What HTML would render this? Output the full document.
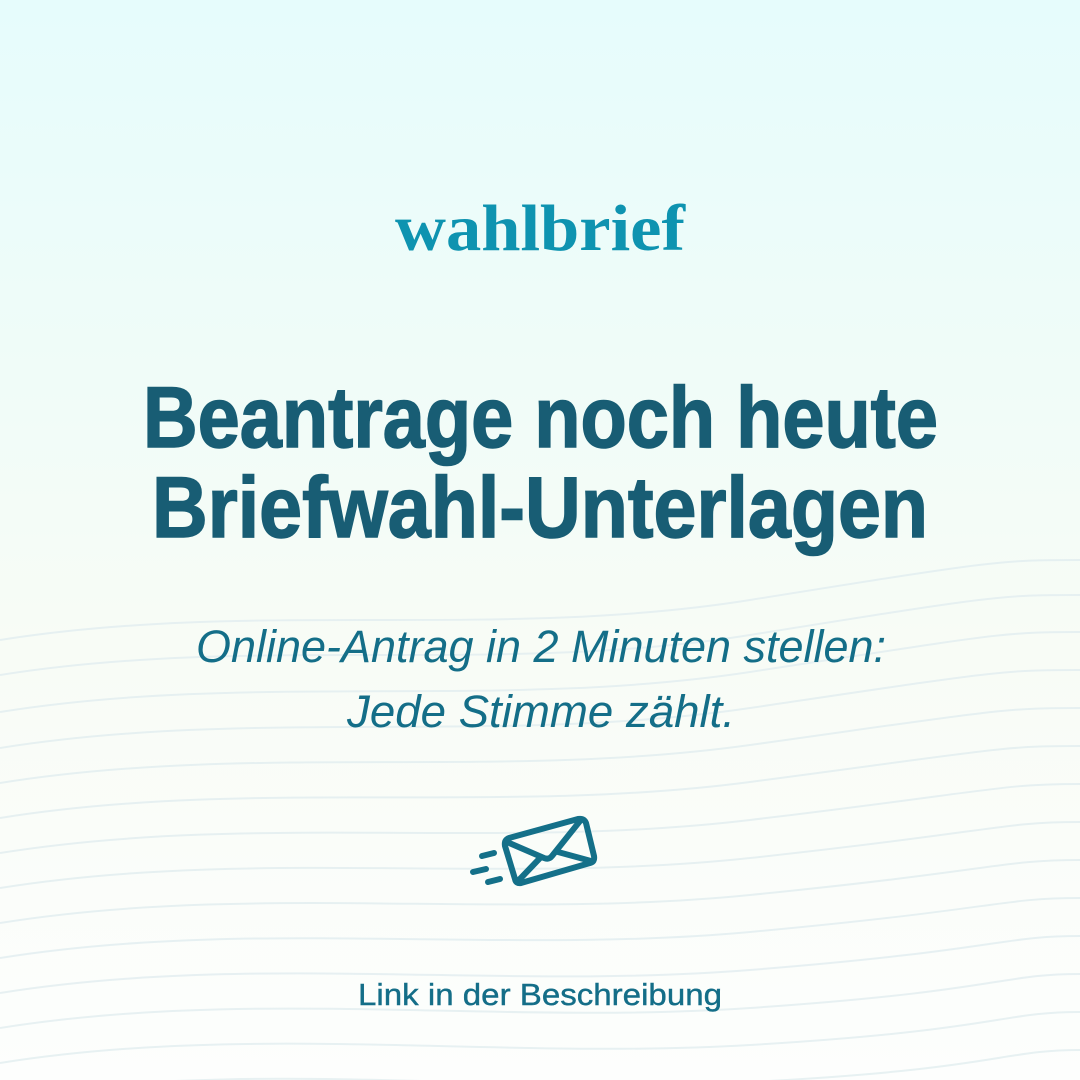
<!DOCTYPE html>
<html><head><meta charset="utf-8"><style>
html,body{margin:0;padding:0;width:1080px;height:1080px;overflow:hidden}
body{background:linear-gradient(180deg,#e6fcfc 0%,#f0fcf8 35%,#f8fcf6 60%,#fdfefd 100%)}
svg{position:absolute;left:0;top:0}
</style></head><body>
<svg width="1080" height="1080" viewBox="0 0 1080 1080">
<g fill="none" stroke="#e2eef0" stroke-width="2" opacity="0.8">
<path d="M0,640 C250,600 500,640 750,600 S1000,560 1080,560"/>
<path d="M0,675 C250,635 500,675 750,635 S1000,595 1080,595"/>
<path d="M0,712 C250,672 500,710 750,672 S1000,632 1080,632"/>
<path d="M0,748 C250,708 500,745 750,708 S1000,670 1080,670"/>
<path d="M0,783 C250,743 500,780 750,745 S1000,708 1080,708"/>
<path d="M0,818 C250,778 500,815 750,782 S1000,746 1080,746"/>
<path d="M0,853 C250,813 500,850 750,820 S1000,784 1080,784"/>
<path d="M0,888 C250,848 500,885 750,858 S1000,822 1080,822"/>
<path d="M0,923 C250,883 500,920 750,895 S1000,860 1080,860"/>
<path d="M0,958 C250,918 500,955 750,932 S1000,898 1080,898"/>
<path d="M0,993 C250,953 500,990 750,970 S1000,936 1080,936"/>
<path d="M0,1028 C250,988 500,1025 750,1008 S1000,974 1080,974"/>
<path d="M0,1063 C250,1023 500,1060 750,1045 S1000,1012 1080,1012"/>
<path d="M0,1098 C250,1058 500,1095 750,1082 S1000,1050 1080,1050"/>
</g>
<text x="395" y="250" textLength="290" lengthAdjust="spacingAndGlyphs" font-family="Liberation Serif, serif" font-weight="bold" font-size="66" fill="#0e93b0">wahlbrief</text>
<g font-family="Liberation Sans, sans-serif" font-weight="bold" font-size="86" fill="#185d74" stroke="#185d74" stroke-width="1.5">
<text x="143" y="447" textLength="795" lengthAdjust="spacingAndGlyphs">Beantrage noch heute</text>
<text x="152" y="537" textLength="776" lengthAdjust="spacingAndGlyphs">Briefwahl-Unterlagen</text>
</g>
<g font-family="Liberation Sans, sans-serif" font-style="italic" font-size="45" fill="#146e88">
<text x="196" y="662" textLength="690" lengthAdjust="spacingAndGlyphs">Online-Antrag in 2 Minuten stellen:</text>
<text x="347" y="727" textLength="388" lengthAdjust="spacingAndGlyphs">Jede Stimme zählt.</text>
</g>
<text x="358" y="1005" textLength="364" lengthAdjust="spacingAndGlyphs" font-family="Liberation Sans, sans-serif" font-size="31" fill="#146e88" stroke="#146e88" stroke-width="0.4">Link in der Beschreibung</text>
<g fill="none" stroke="#147089" stroke-width="6" stroke-linecap="round" stroke-linejoin="round">
<path d="M509,838 L578,819 Q584,818 586,823 L594,856 Q595,862 590,863 L521,883 Q516,884 515,879 L505,846 Q504,840 509,838 Z"/>
<path d="M507,842 L544,858 Q549,860 552,856 L580,821"/>
<path d="M518,881 L541,857"/>
<path d="M591,861 L558,852"/>
<path d="M482,856 L494,853"/>
<path d="M473,872 L486,869"/>
<path d="M488,882 L500,879"/>
</g>
</svg>
</body></html>
